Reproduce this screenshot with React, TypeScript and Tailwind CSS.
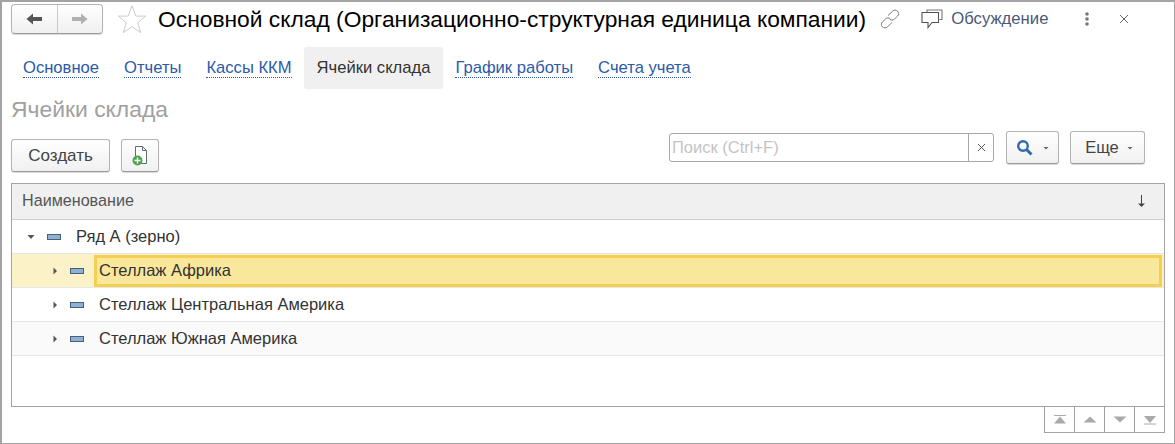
const font = { fontFamily: '"Liberation Sans", Arial, sans-serif' };

function Caret({ dir = 'down', color = '#555' }: { dir?: 'down' | 'right'; color?: string }) {
  return (
    <svg width="8" height="8" viewBox="0 0 8 8" className="shrink-0">
      {dir === 'down' ? <path d="M0.5 2H7.5L4 6Z" fill={color} /> : <path d="M2.5 0.5V7.5L6 4Z" fill={color} />}
    </svg>
  );
}

function SmallCaret() {
  return (
    <svg width="6" height="4" viewBox="0 0 6 4" className="shrink-0">
      <path d="M0.5 1H5.5L3 3.5Z" fill="#666" />
    </svg>
  );
}

function GroupIcon() {
  return <span className="block h-[6px] w-[14px] shrink-0 border border-[#44607f] bg-[#8fb0d3]" />;
}

function Tab({ label }: { label: string }) {
  return (
    <a className="flex h-[42px] items-center px-[12.5px] text-[16.6px] text-[#2c5aa8]">
      <span className="border-b border-dotted border-[#2c5aa8] leading-[18px]">{label}</span>
    </a>
  );
}

function Row({ label, open, selected, stripe, indent }: { label: string; open?: boolean; selected?: boolean; stripe?: boolean; indent?: boolean }) {
  return (
    <div className={`flex h-[34px] items-center border-b border-[#e6e6e6] text-[16.5px] text-[#333] ${selected ? 'bg-[#fbf2c8]' : stripe ? 'bg-[#fafafa]' : 'bg-white'}`}>
      <div className={`flex items-center ${indent ? 'w-[82px] pl-[39px]' : 'w-[59px] pl-[15px]'}`}>
        <Caret dir={open ? 'down' : 'right'} />
        <span className={indent ? 'ml-[11px]' : 'ml-[12px]'}>
          <GroupIcon />
        </span>
      </div>
      {selected ? (
        <div className="mr-[2px] flex h-[32px] flex-1 items-center border-[3px] border-[#f5cf52] bg-[#f9e79b] pl-[2px]">{label}</div>
      ) : (
        <div className="pl-[5px]">{label}</div>
      )}
    </div>
  );
}

function PagerCell({ kind }: { kind: 'first' | 'up' | 'down' | 'last' }) {
  return (
    <div className="flex h-[25px] w-[30px] items-center justify-center border-l border-[#a0a0a0]">
      <svg width="14" height="10" viewBox="0 0 14 10">
        {kind === 'first' && <path d="M1 0H13V1H1ZM7 1.5L13 8.5H1Z" fill="#aaa" />}
        {kind === 'up' && <path d="M7 1.5L13.5 7.5H0.5Z" fill="#aaa" />}
        {kind === 'down' && <path d="M0.5 1.5H13.5L7 7.5Z" fill="#aaa" />}
        {kind === 'last' && <path d="M1 1H13L7 8ZM1 8.5H13V9.5H1Z" fill="#aaa" />}
      </svg>
    </div>
  );
}

const btn = 'flex items-center justify-center rounded-[3px] border border-[#b4b4b4] border-b-[#9a9a9a] bg-gradient-to-b from-white to-[#f0f0f0] shadow-[0_1px_1px_rgba(0,0,0,0.15)]';

export default function App() {
  return (
    <div style={font} className="h-[444px] w-[1175px] overflow-hidden border border-t-2 border-l-2 border-[#a3a3a3] bg-white">
      {/* title bar */}
      <div className="flex h-[34px] items-center">
        <div className={`ml-[9px] flex h-[30px] w-[92px] ${btn} rounded-[4px]`}>
          <div className="flex h-full w-[46px] items-center justify-center border-r border-[#c8c8c8]">
            <svg width="18" height="14" viewBox="0 0 18 14">
              <path d="M8 1.5L1.5 7L8 12.5V9H17V5H8Z" fill="#555" />
            </svg>
          </div>
          <div className="flex h-full w-[45px] items-center justify-center">
            <svg width="18" height="14" viewBox="0 0 18 14">
              <path d="M10 1.5L16.5 7L10 12.5V9H1V5H10Z" fill="#b0b0b0" />
            </svg>
          </div>
        </div>
        <svg width="32" height="30" viewBox="0 0 32 31" className="ml-[13px]">
          <path d="M16 2L20 12.5L30 12.5L22 19.5L25 29.5L16 23.5L7 29.5L10 19.5L2 12.5L12 12.5Z" fill="none" stroke="#c8c8c8" strokeWidth="1" />
        </svg>
        <div className="ml-[10px] whitespace-nowrap text-[22.8px] leading-[30px] text-black">
          Основной склад (Организационно-структурная единица компании)
        </div>
        <svg width="24" height="22" viewBox="0 0 24 22" fill="none" stroke="#777" strokeWidth="1" className="ml-[12px]">
          <path d="M10 7.5L14.5 3.2C16 1.8 18.3 1.8 19.6 3.1C21 4.5 21 6.7 19.6 8L16.5 11C15 12.4 12.8 12.4 11.6 11" />
          <path d="M14 14.5L9.5 18.8C8 20.2 5.7 20.2 4.4 18.9C3 17.5 3 15.3 4.4 14L7.5 11C9 9.6 11.2 9.6 12.4 11" />
        </svg>
        <svg width="22" height="20" viewBox="0 0 22 20" fill="none" stroke="#555" strokeWidth="1.1" className="ml-[19px]">
          <path d="M6 3.5V1H21V10.5H18.5" stroke="#777" />
          <path d="M1 3.5H17.5V13.5H11L7 18.5V13.5H1Z" />
        </svg>
        <span className="ml-[8px] text-[16.7px] text-[#4a5a78]">Обсуждение</span>
        <svg width="6" height="14" viewBox="0 0 6 14" className="ml-[36px]">
          <circle cx="3" cy="2" r="1.8" fill="#777" />
          <circle cx="3" cy="7" r="1.8" fill="#777" />
          <circle cx="3" cy="12" r="1.8" fill="#777" />
        </svg>
        <svg width="10" height="10" viewBox="0 0 10 10" className="ml-[29px]" stroke="#666" strokeWidth="1">
          <path d="M1 1L9 9M9 1L1 9" />
        </svg>
      </div>

      {/* tabs */}
      <div className="mt-[11px] flex h-[42px] pl-[8.5px]">
        <Tab label="Основное" />
        <Tab label="Отчеты" />
        <Tab label="Кассы ККМ" />
        <div className="flex h-[42px] items-center rounded-[3px] bg-[#f0f0f0] px-[12.5px] text-[16.6px] text-[#333]">Ячейки склада</div>
        <Tab label="График работы" />
        <Tab label="Счета учета" />
      </div>

      {/* section title */}
      <div className="mt-[5px] pl-[9px] text-[22.9px] leading-[30px] text-[#a0a0a0]">Ячейки склада</div>

      {/* toolbar: left buttons sit lower than the search group */}
      <div className="mt-[7px] flex h-[41px] items-start pl-[9px]">
        <button className={`${btn} mt-[8px] h-[33px] w-[99px] text-[17px] text-[#444]`}>Создать</button>
        <button className={`${btn} ml-[11px] mt-[8px] h-[33px] w-[38px]`}>
          <svg width="16" height="20" viewBox="0 0 16 20">
            <path d="M3.5 0.5H10.5L14.5 4.5V17.5H3.5Z" fill="#fff" stroke="#5f6b75" />
            <path d="M10.5 0.5V4.5H14.5" fill="none" stroke="#5f6b75" />
            <circle cx="5.5" cy="14.5" r="5" fill="#4aa64f" />
            <path d="M5.5 11.5V17.5M2.5 14.5H8.5" stroke="#fff" strokeWidth="1.4" />
          </svg>
        </button>
        <div className="ml-[510px] mt-[2px] flex h-[29px] w-[325px] rounded-[3px] border border-[#a8a8a8] bg-white">
          <div className="flex flex-1 items-center pl-[2px] text-[16.5px] text-[#c4c4c4]">Поиск (Ctrl+F)</div>
          <div className="flex w-[25px] items-center justify-center border-l border-[#a8a8a8]">
            <svg width="9" height="9" viewBox="0 0 9 9" stroke="#555" strokeWidth="1">
              <path d="M1 1L8 8M8 1L1 8" />
            </svg>
          </div>
        </div>
        <button className={`${btn} ml-[12px] h-[33px] w-[53px] gap-[10px]`}>
          <svg width="17" height="17" viewBox="0 0 17 17" fill="none" stroke="#2f6da8" strokeWidth="2.4">
            <circle cx="7" cy="7" r="4.8" />
            <path d="M10.5 10.5L15.5 15.5" strokeWidth="3" />
          </svg>
          <SmallCaret />
        </button>
        <button className={`${btn} ml-[11px] h-[33px] w-[75px] gap-[8px] pl-[3px] text-[16.5px] text-[#444]`}>
          Еще
          <SmallCaret />
        </button>
      </div>

      {/* table */}
      <div className="ml-[9px] mt-[11px] h-[224px] w-[1154px] border border-[#a3a3a3]">
        <div className="flex h-[36px] items-center justify-between border-b border-[#cfcfcf] bg-[#f0f0f0] pb-[2px] pl-[10px] pr-[18px] text-[16.15px] text-[#555]">
          <span>Наименование</span>
          <svg width="9" height="14" viewBox="0 0 9 14" fill="none" stroke="#444">
            <path d="M4.5 1V12" />
            <path d="M1 9.5H8L4.5 13Z" fill="#444" stroke="none" />
          </svg>
        </div>
        <Row label="Ряд А (зерно)" open />
        <Row label="Стеллаж Африка" indent selected />
        <Row label="Стеллаж Центральная Америка" indent />
        <Row label="Стеллаж Южная Америка" indent stripe />
      </div>

      {/* pager */}
      <div className="ml-[1042px] flex h-[26px] w-[121px] border-r border-b border-[#a3a3a3]">
        <PagerCell kind="first" />
        <PagerCell kind="up" />
        <PagerCell kind="down" />
        <PagerCell kind="last" />
      </div>
    </div>
  );
}
